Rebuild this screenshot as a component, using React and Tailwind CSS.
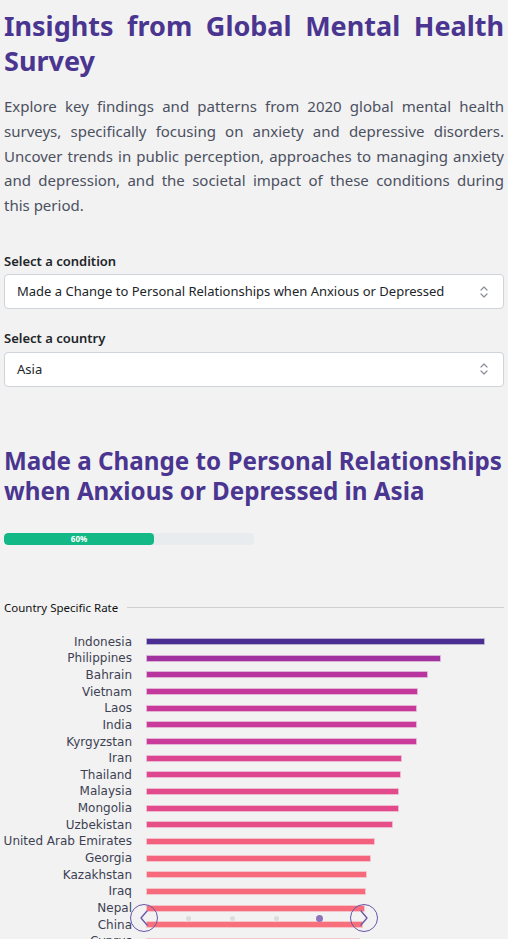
import React from "react";

const rows = [
  ["Indonesia", 339, "#4b2e91"],
  ["Philippines", 295, "#a232a0"],
  ["Bahrain", 282, "#b8349e"],
  ["Vietnam", 272, "#c5389b"],
  ["Laos", 271, "#c8399a"],
  ["India", 271, "#c93a9a"],
  ["Kyrgyzstan", 271, "#c93a9a"],
  ["Iran", 256, "#dc4690"],
  ["Thailand", 255, "#de478f"],
  ["Malaysia", 253, "#e24a8b"],
  ["Mongolia", 253, "#e34a8b"],
  ["Uzbekistan", 247, "#e64e88"],
  ["United Arab Emirates", 229, "#f2607e"],
  ["Georgia", 225, "#f4657d"],
  ["Kazakhstan", 221, "#f66a7c"],
  ["Iraq", 220, "#f66b7b"],
  ["Nepal", 219, "#f76d7b"],
  ["China", 217, "#f8707b"],
  ["Cyprus", 214, "#f9737a"],
  ["Japan", 210, "#f9757a"],
  ["Sri Lanka", 205, "#fa777a"],
];

const paraLines = [
  "Explore key findings and patterns from 2020 global mental health",
  "surveys, specifically focusing on anxiety and depressive disorders.",
  "Uncover trends in public perception, approaches to managing anxiety",
  "and depression, and the societal impact of these conditions during",
];

function UpDown() {
  return (
    <svg width="10" height="14" viewBox="0 0 10 14" fill="none" stroke="#8a8f98" strokeWidth="1.2" strokeLinecap="round" strokeLinejoin="round">
      <path d="M2 5 L5 2 L8 5" />
      <path d="M2 9 L5 12 L8 9" />
    </svg>
  );
}

function Select({ value }) {
  return (
    <div className="flex h-[35px] items-center justify-between rounded-[4px] border border-[#ced4da] bg-white pl-[12px] pr-[14px] text-[13px] text-[#212529]">
      <span className="whitespace-nowrap">{value}</span>
      <UpDown />
    </div>
  );
}

export default function App() {
  return (
    <div className="min-h-[939px] bg-[#f2f2f2] px-[4px] font-['Noto_Sans',sans-serif]">
      <h1 className="pt-[8px] text-justify text-[27px] font-bold leading-[35px] text-[#4a3590]">
        Insights from Global Mental Health Survey
      </h1>
      <p className="mt-[16px] text-justify text-[15px] leading-[24.8px] text-[#4b5060]">
        {paraLines.map((l) => (
          <span key={l} className="block whitespace-nowrap text-justify [text-align-last:justify]">
            {l}
          </span>
        ))}
        <span className="block">this period.</span>
      </p>

      <div className="mt-[34px]">
        <div className="mb-[3px] text-[13px] font-semibold text-[#212529]">Select a condition</div>
        <Select value="Made a Change to Personal Relationships when Anxious or Depressed" />
      </div>
      <div className="mt-[20px]">
        <div className="mb-[3px] text-[13px] font-semibold text-[#212529]">Select a country</div>
        <Select value="Asia" />
      </div>

      <h2 className="mt-[59px] text-[24.2px] font-bold leading-[30px] text-[#4a3590]">
        Made a Change to Personal Relationships when Anxious or Depressed in Asia
      </h2>

      <div className="mt-[27px] h-[12px] w-[250px] overflow-hidden rounded-[4px] bg-[#e9ecef]">
        <div className="flex h-full w-[150px] items-center justify-center rounded-[4px] bg-[#12b886] text-[8px] font-bold leading-none text-white">
          60%
        </div>
      </div>

      <div className="mt-[54px] flex items-center gap-[9px]">
        <span className="text-[11.5px] text-[#111]">Country Specific Rate</span>
        <div className="h-px flex-1 bg-[#cfcfcf]" />
      </div>

      <div className="relative mt-[17px] font-['DejaVu_Sans',sans-serif]">
        {rows.map(([name, w, c]) => (
          <div key={name} className="flex h-[16.67px] items-center">
            <div className="flex w-[128px] shrink-0 justify-end">
              <span className="whitespace-nowrap text-[12px] leading-none text-[#3d4152]">{name}</span>
            </div>
            <div className="ml-[14px] h-[7px] rounded-[1px]" style={{ width: w, backgroundColor: c + "55" }}>
              <div className="m-px h-[5px]" style={{ backgroundColor: c }} />
            </div>
          </div>
        ))}

        <div className="absolute left-[126px] top-[271px] flex w-[248px] items-center justify-between">
          <div className="flex h-[28px] w-[28px] items-center justify-center rounded-full border border-[#6a55a8]">
            <svg width="10" height="16" viewBox="0 0 10 16" fill="none" stroke="#6a55a8" strokeWidth="1.3" strokeLinecap="round" strokeLinejoin="round">
              <path d="M8 1 L2 8 L8 15" />
            </svg>
          </div>
          <div className="flex items-center gap-[39px]">
            <span className="h-[5px] w-[5px] rounded-full bg-[#dcdcdc]" />
            <span className="h-[5px] w-[5px] rounded-full bg-[#dcdcdc]" />
            <span className="h-[5px] w-[5px] rounded-full bg-[#dcdcdc]" />
            <span className="-ml-[2px] h-[7px] w-[7px] rounded-full bg-[#8e74bb]" />
          </div>
          <div className="flex h-[28px] w-[28px] items-center justify-center rounded-full border border-[#6a55a8]">
            <svg width="10" height="16" viewBox="0 0 10 16" fill="none" stroke="#6a55a8" strokeWidth="1.3" strokeLinecap="round" strokeLinejoin="round">
              <path d="M2 1 L8 8 L2 15" />
            </svg>
          </div>
        </div>
      </div>
    </div>
  );
}
